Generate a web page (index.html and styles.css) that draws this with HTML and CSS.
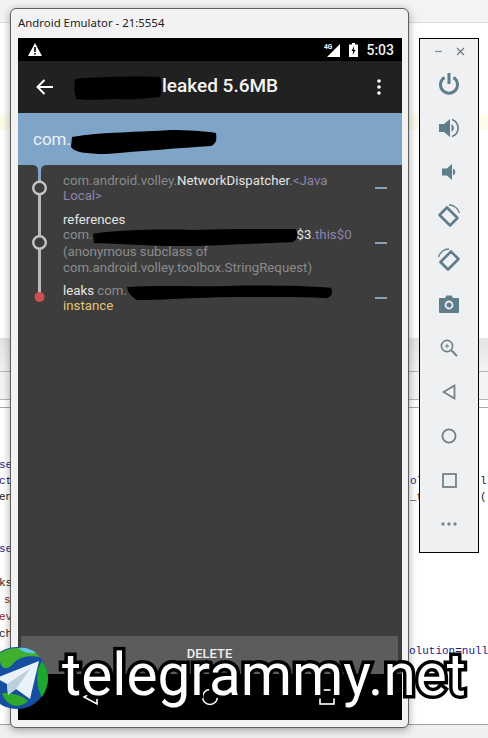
FILE: index.html
```html
<!DOCTYPE html>
<html>
<head>
    <meta charset="UTF-8">
    <title>Android Emulator - 21:5554</title>
    <link rel="stylesheet" href="styles.css">
</head>
<body>
    <!-- desktop behind the emulator -->
    <div class="desktop">
        <div class="ide-top"></div>
        <div class="ide-warning"></div>
        <div class="ide-tabs"></div>
        <div class="ide-tabs-light"></div>
        <div class="ide-rule"></div>
        <div class="ide-code"></div>
        <div class="ide-status"></div>

        <span class="code code-blue" style="left:-1px;top:458px">se</span>
        <span class="code code-blue" style="left:-1px;top:474px">ct</span>
        <span class="code" style="left:-1px;top:490px">en</span>
        <span class="code code-blue" style="left:-1px;top:542px">se</span>
        <span class="code" style="left:-1px;top:576px">ks</span>
        <span class="code code-red" style="left:4px;top:593px">s</span>
        <span class="code code-red" style="left:-1px;top:610px">ev</span>
        <span class="code" style="left:-1px;top:627px">ch</span>
        <span class="code code-blue" style="left:410px;top:474px">ol</span>
        <span class="code code-blue" style="left:480px;top:474px">l</span>
        <span class="code" style="left:410px;top:490px">_t</span>
        <span class="code" style="left:480px;top:490px">(</span>
        <span class="code code-blue" style="left:409px;top:644px">olution=null</span>
    </div>

    <!-- emulator window -->
    <div class="emulator">
        <div class="window-title">Android Emulator - 21:5554</div>
        <div class="screen">
            <div class="status-bar">
                <svg class="warn" width="14" height="13" viewBox="0 0 14 13"><path d="M7 0L14 13H0Z" fill="#fff"/><rect x="6.2" y="4" width="1.6" height="5" fill="#000"/><rect x="6.2" y="10" width="1.6" height="1.6" fill="#000"/></svg>
                <div class="status-right">
                    <svg width="17" height="14" viewBox="0 0 17 14"><path d="M16 1V14H3Z" fill="#fff"/><text x="0" y="6" class="net-label">4G</text></svg>
                    <svg width="9" height="14" viewBox="0 0 9 14"><path d="M3 0H6V1.5H9V14H0V1.5H3Z" fill="#fff"/><path d="M5.2 3L2.5 8H4.2L3.6 12L6.6 6.8H4.8Z" fill="#000"/></svg>
                    <span class="clock">5:03</span>
                </div>
            </div>
            <div class="app-bar">
                <svg class="back" width="18" height="16" viewBox="0 0 18 16"><path d="M8.5 1L1.5 8L8.5 15M1.5 8H17" fill="none" stroke="#fff" stroke-width="2"/></svg>
                <h1 class="app-title"><svg class="blob blob-title" viewBox="0 0 86 24" preserveAspectRatio="none"><path d="M1 3C20 1 60 0 84 1C86 8 86 16 84 21C70 22 62 24 40 23C24 24 8 24 2 23C0 16 0 9 1 3Z"/></svg>leaked 5.6MB</h1>
                <svg class="menu" width="4" height="16" viewBox="0 0 4 16" fill="#fff"><circle cx="2" cy="2" r="1.8"/><circle cx="2" cy="8" r="1.8"/><circle cx="2" cy="14" r="1.8"/></svg>
            </div>
            <div class="leak-header">com.<svg class="blob blob-head" viewBox="0 0 145 24" preserveAspectRatio="none"><path d="M1 7C30 2 70 2 100 0C115 0 135 1 145 3C146 10 145 14 140 16C110 18 70 21 35 24C15 24 3 22 0 17Z"/></svg></div>
            <div class="trace">
                <svg class="timeline" width="30" height="150" viewBox="0 0 30 150">
                    <path d="M7 0C11 0 13 2 13 6V18H16V6C16 2 18 0 22 0Z" fill="#7ea4c8"/>
                    <rect x="13" y="15" width="3" height="117" fill="#b9b9b9"/>
                    <circle cx="14.5" cy="23" r="6.3" fill="#3d3d3d" stroke="#c4c4c4" stroke-width="2.4"/>
                    <circle cx="14.5" cy="77.5" r="6.3" fill="#3d3d3d" stroke="#c4c4c4" stroke-width="2.4"/>
                    <circle cx="14.5" cy="132" r="5" fill="#c9504e"/>
                </svg>
                <div class="row">
                    <p class="row-text">com.android.volley.<b>NetworkDispatcher</b>.<i>&lt;Java Local&gt;</i></p>
                    <span class="row-minus"></span>
                </div>
                <div class="row">
                    <p class="row-text"><b>references</b><br>com.<svg class="blob blob-ref" viewBox="0 0 205 18" preserveAspectRatio="none"><path d="M0 5C30 1 60 0 100 1C140 0 180 0 204 0C206 6 206 12 200 14C160 15 130 18 90 18C60 18 25 15 1 15Z"/></svg><b>$3</b>.<i>this$0</i><br>(anonymous subclass of<br>com.android.volley.toolbox.StringRequest)</p>
                    <span class="row-minus"></span>
                </div>
                <div class="row">
                    <p class="row-text"><b>leaks</b> com.<svg class="blob blob-leak" viewBox="0 0 205 16" preserveAspectRatio="none"><path d="M0 2C40 0 60 2 100 1C140 0 180 1 204 3C206 8 205 12 200 14C170 12 130 13 90 13C60 14 30 16 10 16C4 12 1 8 0 2Z"/></svg><br><em>instance</em></p>
                    <span class="row-minus"></span>
                </div>
            </div>
            <div class="delete-bar">
                <button class="delete-btn" type="button">DELETE</button>
            </div>
            <div class="nav-bar">
                <svg width="18" height="18" viewBox="0 0 18 18"><path d="M15 2V16L2 9Z" fill="none" stroke="#fff" stroke-width="1.6"/></svg>
                <svg width="18" height="18" viewBox="0 0 18 18"><circle cx="9" cy="9" r="7.5" fill="none" stroke="#fff" stroke-width="1.6"/></svg>
                <svg width="16" height="16" viewBox="0 0 16 16"><rect x="1" y="1" width="14" height="14" fill="none" stroke="#fff" stroke-width="1.6"/></svg>
            </div>
        </div>
    </div>

    <!-- emulator side controls -->
    <div class="controls">
        <div class="controls-head">
            <svg width="9" height="9" viewBox="0 0 9 9"><path d="M1 4.5H8" stroke="#8a8f93" stroke-width="1.2"/></svg>
            <svg width="9" height="9" viewBox="0 0 9 9"><path d="M1 1L8 8M8 1L1 8" stroke="#6c7175" stroke-width="1.1"/></svg>
        </div>
        <div class="control"><svg width="20" height="22" viewBox="0 0 20 22" fill="none" stroke="#607d8b" stroke-width="3"><path d="M10 0V11"/><path d="M5.5 4.5A8.5 8.5 0 1 0 14.5 4.5"/></svg></div>
        <div class="control"><svg width="22" height="22" viewBox="0 0 22 22"><path d="M1 7H6L12 2V20L6 15H1Z" fill="#607d8b"/><path d="M13.5 7A4.5 4.5 0 0 1 13.5 15Z" fill="#607d8b"/><path d="M14 2.5A9 9 0 0 1 14 19.5" fill="none" stroke="#607d8b" stroke-width="1.6"/></svg></div>
        <div class="control"><svg width="16" height="18" viewBox="0 0 16 18"><path d="M1 5.5H6L11 1V17L6 12.5H1Z" fill="#607d8b"/><path d="M12 5.5A3.8 3.8 0 0 1 12 12.5Z" fill="#607d8b"/></svg></div>
        <div class="control"><svg width="24" height="24" viewBox="0 0 24 24" fill="none" stroke="#607d8b"><path d="M2.5 11L10 3.5L20.5 14L13 21.5Z" stroke-width="2.6" stroke-linejoin="round"/><path d="M12 1A11 11 0 0 1 22.5 9" stroke-width="1.3"/></svg></div>
        <div class="control"><svg width="24" height="24" viewBox="0 0 24 24" fill="none" stroke="#607d8b"><path d="M21.5 11L14 3.5L3.5 14L11 21.5Z" stroke-width="2.6" stroke-linejoin="round"/><path d="M12 1A11 11 0 0 0 1.5 9" stroke-width="1.3"/></svg></div>
        <div class="control"><svg width="20" height="18" viewBox="0 0 20 18"><path d="M1 3H6L7.5 0.5H12.5L14 3H19A1 1 0 0 1 20 4V17A1 1 0 0 1 19 18H1A1 1 0 0 1 0 17V4A1 1 0 0 1 1 3Z" fill="#607d8b"/><circle cx="10" cy="10" r="3.5" fill="none" stroke="#eff0f1" stroke-width="1.8"/></svg></div>
        <div class="control"><svg width="18" height="18" viewBox="0 0 18 18" fill="none" stroke="#6f8088"><circle cx="7" cy="7" r="5.6" stroke-width="1.6"/><path d="M11 11L17 17" stroke-width="2"/><path d="M4.8 7H9.2M7 4.8V9.2" stroke-width="1"/></svg></div>
        <div class="control"><svg width="14" height="16" viewBox="0 0 14 16"><path d="M12.5 1.5V14.5L1.5 8Z" fill="none" stroke="#6f7c82" stroke-width="1.7"/></svg></div>
        <div class="control"><svg width="16" height="16" viewBox="0 0 16 16"><circle cx="8" cy="8" r="6.6" fill="none" stroke="#6f7c82" stroke-width="1.7"/></svg></div>
        <div class="control"><svg width="15" height="15" viewBox="0 0 15 15"><rect x="1" y="1" width="13" height="13" fill="none" stroke="#6f7c82" stroke-width="1.7"/></svg></div>
        <div class="control"><svg width="16" height="4" viewBox="0 0 16 4" fill="#7d878c"><circle cx="2" cy="2" r="1.7"/><circle cx="8" cy="2" r="1.7"/><circle cx="14" cy="2" r="1.7"/></svg></div>
    </div>

    <!-- watermark over everything -->
    <div class="watermark">
        <svg class="globe" width="50" height="62" viewBox="0 0 50 62">
            <circle cx="19" cy="31" r="31" fill="#14509f"/>
            <path d="M2 6C14 -2 34 0 42 10C30 8 20 10 14 18C8 24 0 22 2 6Z" fill="#3fb02e"/>
            <path d="M20 1C26 0 34 2 38 6C32 7 26 6 20 1Z" fill="#5fc7e8"/>
            <path d="M44 14C52 24 52 38 44 50C40 44 38 32 40 22Z" fill="#1fa62e"/>
            <path d="M4 46C14 46 24 48 30 54C22 62 8 60 4 46Z" fill="#2fa82c"/>
            <path d="M-2 31L41 14L32 52L18 42L10 48L9 37Z" fill="#e9f2f8"/>
            <path d="M9 37L33 21L18 42L10 48Z" fill="#bcd0dc"/>
        </svg>
        <span class="watermark-text">telegrammy.net</span>
    </div>
</body>
</html>
```

FILE: styles.css
```css
html, body {
    margin: 0;
    padding: 0;
}
body {
    position: relative;
    width: 488px;
    height: 738px;
    overflow: hidden;
    background-color: #fff;
    font-family: Roboto, sans-serif;
}

/* desktop */
.desktop {
    position: absolute;
    inset: 0;
    display: flex;
    flex-direction: column;
}
.ide-top {
    height: 22px;
    flex: none;
    background-color: #f3f3f3;
    border-bottom: 1px solid #dcdcdc;
}
.ide-warning {
    height: 15px;
    flex: none;
    margin-top: 92px;
    background-color: #fdfbe9;
}
.ide-tabs {
    height: 33px;
    flex: none;
    margin-top: 208px;
    background: linear-gradient(#e4e4e4, #f2f2f2);
    border-bottom: 1px solid #b5b5b5;
}
.ide-tabs-light {
    height: 27px;
    flex: none;
    background-color: #f4f4f4;
    border-bottom: 1px solid #b5b5b5;
}
.ide-rule {
    height: 7px;
    flex: none;
    border-bottom: 1px solid #a8a8a8;
}
.ide-code {
    flex: 1;
}
.ide-status {
    height: 13px;
    flex: none;
    background-color: #f0f0f0;
    border-top: 1px solid #a0a0a0;
}
.code {
    position: absolute;
    font-family: "Liberation Mono", monospace;
    font-size: 11px;
    line-height: 14px;
    color: #222;
    white-space: nowrap;
}
.code-blue {
    color: #1d1d7a;
}
.code-red {
    color: #8a1f1f;
}

/* emulator window */
.emulator {
    position: absolute;
    left: 10px;
    top: 8px;
    width: 399px;
    height: 720px;
    box-sizing: border-box;
    display: flex;
    flex-direction: column;
    padding: 0 6px 7px 7px;
    background-color: #f2f2f2;
    border: 1px solid #5e5e5e;
    border-radius: 6px;
    box-shadow: 0 2px 8px rgba(0, 0, 0, 0.35);
}
.window-title {
    height: 29px;
    flex: none;
    font-family: "Noto Sans", sans-serif;
    font-size: 11.4px;
    line-height: 28px;
    color: #222;
}
.screen {
    flex: 1;
    display: flex;
    flex-direction: column;
    background-color: #3d3d3d;
    min-height: 0;
}
.status-bar {
    height: 23px;
    flex: none;
    display: flex;
    align-items: center;
    justify-content: space-between;
    padding: 0 8px 0 10px;
    background-color: #000;
}
.status-right {
    display: flex;
    align-items: center;
    gap: 8px;
}
.net-label {
    font-size: 6.5px;
    font-weight: 700;
    fill: #fff;
}
.clock {
    font-size: 14px;
    font-weight: 500;
    color: #eee;
}
.app-bar {
    height: 52px;
    flex: none;
    display: flex;
    align-items: center;
    padding: 0 21px 0 18px;
    background-color: #212121;
    box-sizing: border-box;
}
.app-title {
    flex: 1;
    margin: 0 0 0 20px;
    font-size: 19px;
    font-weight: 500;
    color: #f4f4f4;
    white-space: nowrap;
}
.blob {
    fill: #000;
    overflow: visible;
}
.blob-title {
    width: 88px;
    height: 24px;
    vertical-align: -8px;
}
.leak-header {
    height: 52px;
    flex: none;
    box-sizing: border-box;
    padding-left: 15px;
    font-size: 17px;
    line-height: 52px;
    color: #eef3f8;
    background-color: #7ea4c8;
}
.blob-head {
    width: 145px;
    height: 24px;
    vertical-align: -9px;
}
.trace {
    position: relative;
    flex: 1;
    display: flex;
    flex-direction: column;
    gap: 8px;
    padding: 8px 0 0 45px;
}
.timeline {
    position: absolute;
    left: 7px;
    top: 0;
}
.row {
    display: flex;
    align-items: center;
}
.row-text {
    flex: none;
    width: 292px;
    margin: 0;
    font-size: 13.25px;
    line-height: 15.4px;
    color: #8b8b8b;
}
.row-text b {
    font-weight: 400;
    color: #e4e4e4;
}
.row-text i {
    font-style: normal;
    color: #8d84ab;
}
.row-text em {
    font-style: normal;
    color: #e6c377;
}
.blob-ref {
    width: 204px;
    height: 17px;
    margin: -2px 0;
    vertical-align: -5px;
}
.blob-leak {
    width: 205px;
    height: 15px;
    margin: -2px 0;
    vertical-align: -3px;
}
.row-minus {
    width: 12px;
    height: 2px;
    margin-left: 20px;
    background-color: #8aa0b5;
}
.delete-bar {
    height: 38px;
    flex: none;
    padding: 0 4px 0 3px;
}
.delete-btn {
    display: block;
    width: 100%;
    height: 100%;
    padding: 0 0 4px;
    border: 0;
    border-radius: 2px;
    background-color: #5c5c5c;
    color: #eee;
    font-family: Roboto, sans-serif;
    font-size: 13px;
    font-weight: 500;
}
.nav-bar {
    height: 46px;
    flex: none;
    display: flex;
    align-items: center;
    justify-content: space-between;
    padding: 0 67px 0 64px;
    background-color: #000;
}

/* side controls */
.controls {
    position: absolute;
    left: 419px;
    top: 38px;
    width: 60px;
    height: 515px;
    box-sizing: border-box;
    display: flex;
    flex-direction: column;
    background-color: #eff0f1;
    border: 1px solid #000;
}
.controls-head {
    height: 22px;
    flex: none;
    margin-top: 1px;
    display: flex;
    align-items: center;
    justify-content: center;
    gap: 13px;
}
.control {
    height: 44px;
    flex: none;
    display: flex;
    align-items: center;
    justify-content: center;
}

/* watermark */
.watermark {
    position: absolute;
    left: -2px;
    top: 647px;
    display: flex;
    align-items: center;
    gap: 14px;
}
.globe {
    flex: none;
    overflow: hidden;
}
.watermark-text {
    position: relative;
    top: -3px;
    font-family: Roboto, sans-serif;
    font-size: 58.5px;
    line-height: 62px;
    color: #fff;
    -webkit-text-stroke: 7px #000;
    paint-order: stroke fill;
    white-space: nowrap;
}
```
